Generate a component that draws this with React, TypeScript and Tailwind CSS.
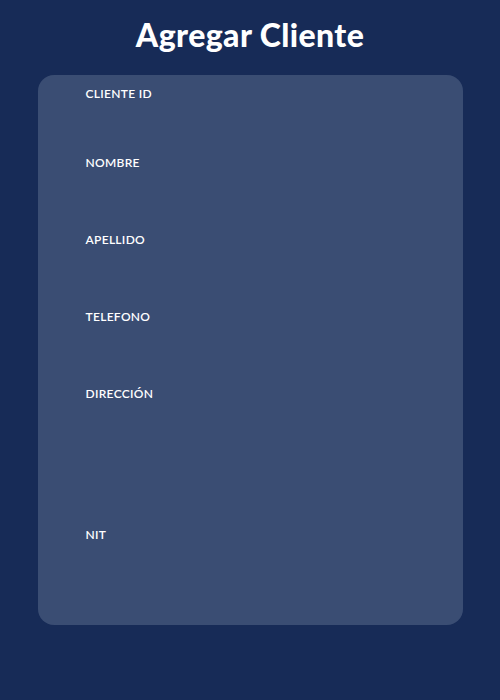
const fields = [
  { label: 'CLIENTE ID', h: 'h-[53px]' },
  { label: 'NOMBRE', h: 'h-[61px]' },
  { label: 'APELLIDO', h: 'h-[61px]' },
  { label: 'TELEFONO', h: 'h-[61px]' },
  { label: 'DIRECCIÓN', h: 'h-[125px]' },
  { label: 'NIT', h: 'h-[82px]' },
]

const Field = ({ label, h }: { label: string; h: string }) => (
  <div className="flex flex-col">
    <label className="text-[12px] leading-4 font-semibold tracking-[0.3px] text-white">{label}</label>
    <div className={h}></div>
  </div>
)

export default function App() {
  return (
    <div className="min-h-[700px] w-[500px] bg-[#172b57] font-['Lato','Open_Sans',sans-serif]">
      <h1 className="pt-[15px] text-center text-[32px] leading-10 font-black text-white tracking-[0.4px]">
        Agregar Cliente
      </h1>
      <div className="mx-auto mt-[20px] w-[425px] rounded-[16px] bg-[#3a4d73] pt-[11px] pl-[48px]">
        {fields.map((f) => (
          <Field key={f.label} label={f.label} h={f.h} />
        ))}
      </div>
    </div>
  )
}
